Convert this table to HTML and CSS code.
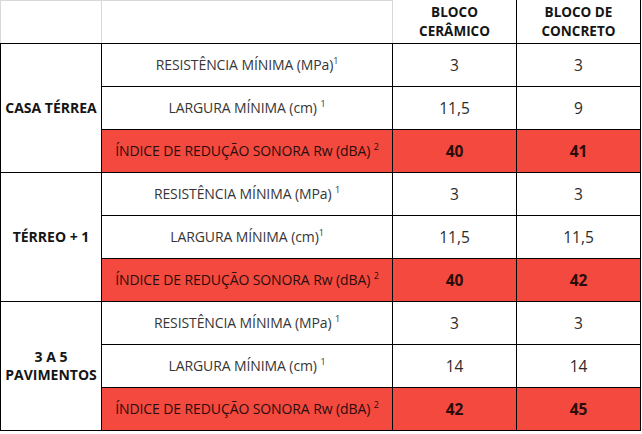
FILE: index.html
```html
<!DOCTYPE html>
<html lang="pt">
<head>
<meta charset="utf-8">
<title>Blocos</title>
<link rel="stylesheet" href="styles.css">
</head>
<body>
<table class="spec">
  <colgroup>
    <col class="c-group">
    <col class="c-label">
    <col class="c-val">
    <col class="c-val">
  </colgroup>
  <thead>
    <tr class="r-head">
      <th class="blank"></th>
      <th class="blank"></th>
      <th class="head">BLOCO<br>CERÂMICO</th>
      <th class="head">BLOCO DE<br>CONCRETO</th>
    </tr>
  </thead>
  <tbody>
    <tr class="r1">
      <th class="group" rowspan="3">CASA TÉRREA</th>
      <td class="label">RESISTÊNCIA MÍNIMA (MPa)<sup>1</sup></td>
      <td class="num">3</td>
      <td class="num">3</td>
    </tr>
    <tr class="r2">
      <td class="label">LARGURA MÍNIMA (cm) <sup>1</sup></td>
      <td class="num">11,5</td>
      <td class="num">9</td>
    </tr>
    <tr class="r3 hot">
      <td class="label">ÍNDICE DE REDUÇÃO SONORA Rw (dBA) <sup>2</sup></td>
      <td class="num strong">40</td>
      <td class="num strong">41</td>
    </tr>
    <tr class="r1">
      <th class="group" rowspan="3">TÉRREO + 1</th>
      <td class="label">RESISTÊNCIA MÍNIMA (MPa) <sup>1</sup></td>
      <td class="num">3</td>
      <td class="num">3</td>
    </tr>
    <tr class="r2">
      <td class="label">LARGURA MÍNIMA (cm)<sup>1</sup></td>
      <td class="num">11,5</td>
      <td class="num">11,5</td>
    </tr>
    <tr class="r3 hot">
      <td class="label">ÍNDICE DE REDUÇÃO SONORA Rw (dBA) <sup>2</sup></td>
      <td class="num strong">40</td>
      <td class="num strong">42</td>
    </tr>
    <tr class="r1">
      <th class="group" rowspan="3">3 A 5<br>PAVIMENTOS</th>
      <td class="label">RESISTÊNCIA MÍNIMA (MPa) <sup>1</sup></td>
      <td class="num">3</td>
      <td class="num">3</td>
    </tr>
    <tr class="r2">
      <td class="label">LARGURA MÍNIMA (cm) <sup>1</sup></td>
      <td class="num">14</td>
      <td class="num">14</td>
    </tr>
    <tr class="r3 hot">
      <td class="label">ÍNDICE DE REDUÇÃO SONORA Rw (dBA) <sup>2</sup></td>
      <td class="num strong">42</td>
      <td class="num strong">45</td>
    </tr>
  </tbody>
</table>
</body>
</html>
```

FILE: styles.css
```css
html, body {
  margin: 0;
  padding: 0;
  background: #ffffff;
}

body {
  font-family: "Open Sans", "Noto Sans", "Liberation Sans", sans-serif;
  color: #2b2b2b;
}

.spec {
  border-collapse: collapse;
  table-layout: fixed;
  width: 641px;
}

.c-group { width: 101px; }
.c-label { width: 291px; }
.c-val { width: 124px; }

.spec th,
.spec td {
  border: 1px solid #000000;
  padding: 0;
  text-align: center;
  vertical-align: middle;
  line-height: 1.3;
}

.r-head { height: 43px; }
.r1, .r2, .r3 { height: 43px; }

.spec th.blank {
  border: 1px solid #d8d8d8;
  border-bottom-color: #000000;
}

.spec th.head {
  border-top-color: #ffffff;
  font-weight: 700;
  font-size: 13.5px;
  color: #151515;
  line-height: 1.4;
}

.group {
  font-weight: 700;
  font-size: 14px;
  color: #151515;
  line-height: 1.4;
}

.label {
  font-size: 14px;
  letter-spacing: -0.1px;
  color: #363636;
}

.label sup {
  font-size: 9px;
  vertical-align: 0;
  position: relative;
  top: -6px;
}

.num {
  font-size: 15.5px;
  color: #2b2b2b;
}

.hot td {
  background: #f4493f;
  color: #2a0d0b;
}

.num.strong {
  font-weight: 700;
  font-size: 15.5px;
  color: #2a0d0b;
}
```
